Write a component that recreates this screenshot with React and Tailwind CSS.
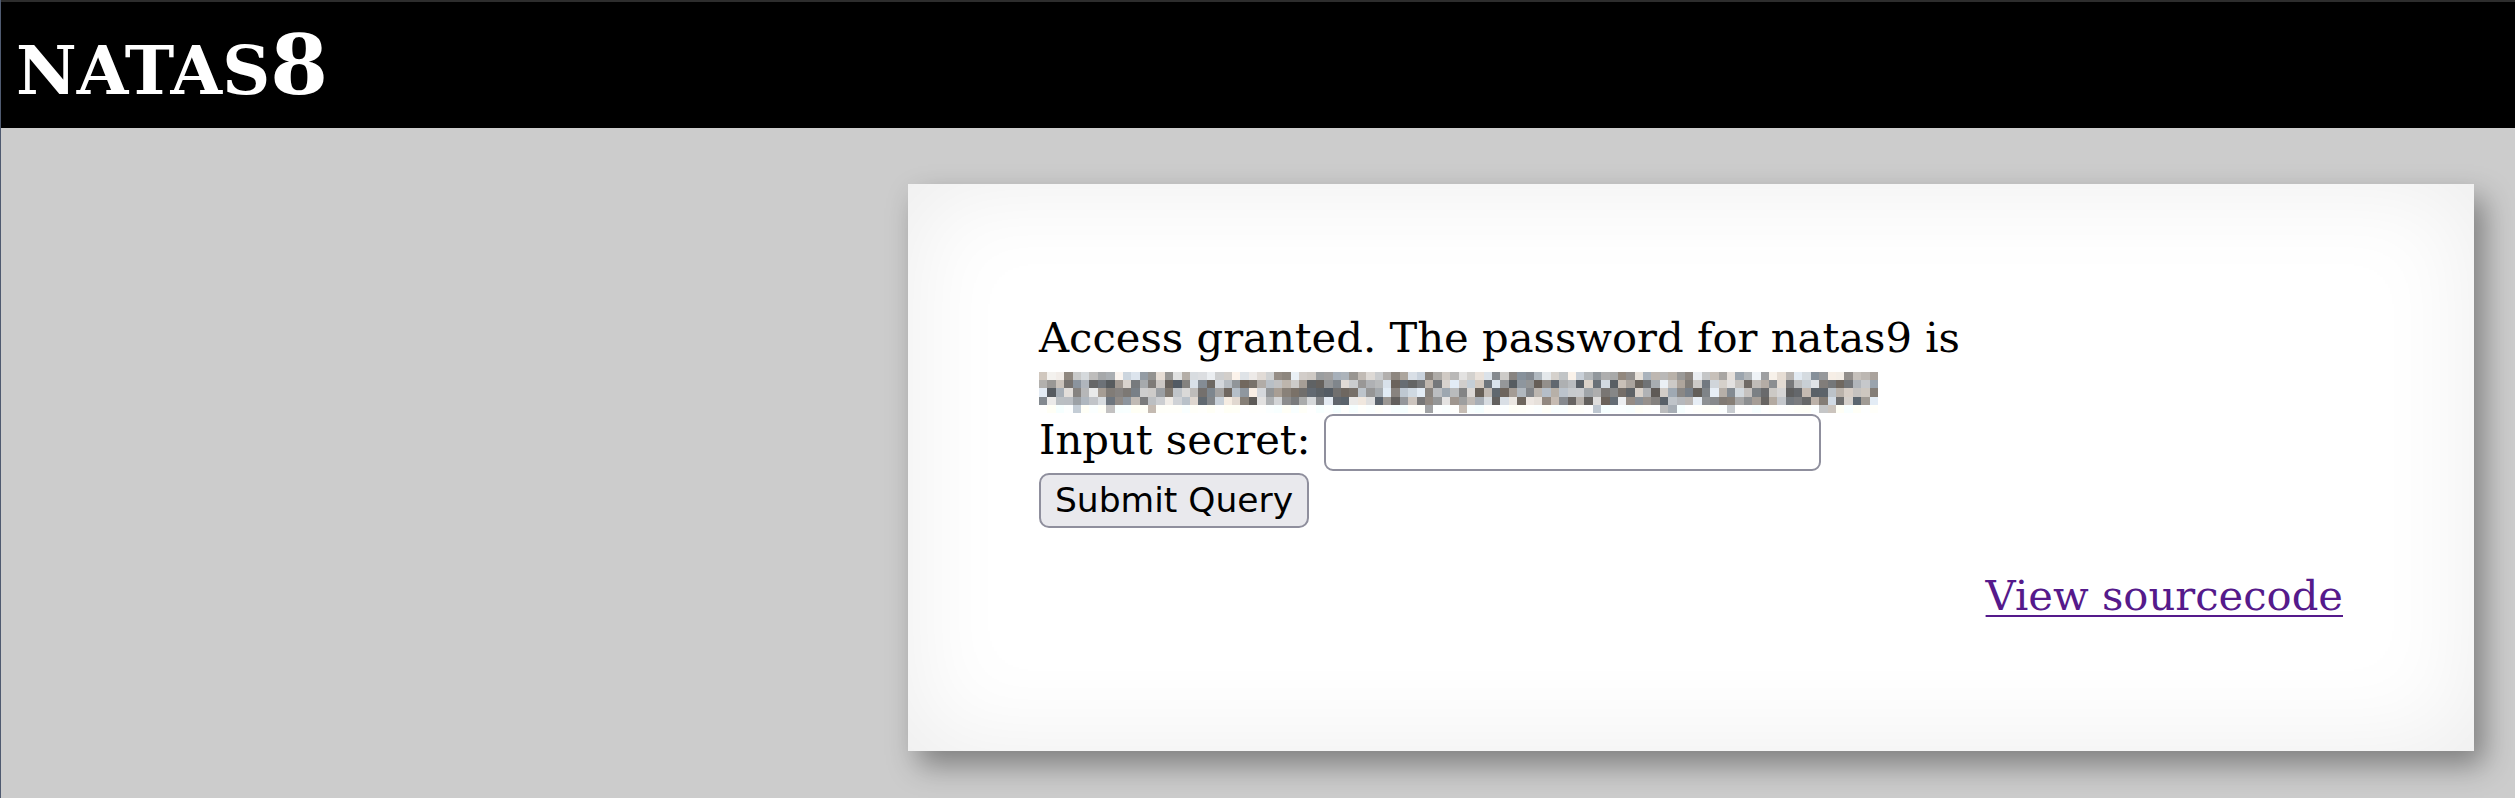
import React from 'react';

// pseudo-random mosaic standing in for the pixelated password
function rng(seed) {
  let s = seed;
  return () => {
    s = (s * 16807) % 2147483647;
    return (s - 1) / 2147483646;
  };
}

const COLS = 100;
const ROWS = 5;

function buildMosaic() {
  const r = rng(9137);
  const cells = [];
  for (let y = 0; y < ROWS; y++) {
    for (let x = 0; x < COLS; x++) {
      let v;
      if (y === 4) {
        v = r() < 0.1 ? 160 + r() * 60 : 255;
      } else if (y === 0) {
        v = r() < 0.6 ? 130 + r() * 80 : 205 + r() * 40;
      } else {
        v = 90 + r() * 150;
      }
      const tint = (r() - 0.5) * 20;
      const c = `rgb(${Math.round(v + tint)}, ${Math.round(v)}, ${Math.round(v - tint)})`;
      cells.push(<div key={`${x}-${y}`} style={{ backgroundColor: c }} />);
    }
  }
  return cells;
}

const serif = 'font-["DejaVu_Serif","Liberation_Serif",serif]';

export default function App() {
  const mosaic = buildMosaic();

  return (
    <div className="min-h-screen bg-[#cccccc] border-l border-[#4f5a70]">
      <div className="h-[2px] bg-[#2d2d2d]" />
      <div className="h-[126px] bg-black pl-[15px] pt-[22px]">
        <h1 className={`${serif} flex items-baseline font-bold text-white`}>
          <span className="text-[66.5px] leading-[83px]">NATAS</span>
          <span className="text-[83px] leading-[83px]">8</span>
        </h1>
      </div>

      <div className="pl-[907px] pt-[56px] pb-[47px]">
        <div className={`${serif} w-[1566px] bg-white px-[131px] pt-[130px] pb-[131px] text-[41.7px] leading-[48.5px] text-black shadow-[10px_14px_28px_rgba(0,0,0,0.38),inset_0_0_100px_rgba(0,0,0,0.08)]`}>
          <div>Access granted. The password for natas9 is</div>
          <div className="h-[49px] pt-[9px]">
            <div
              className="grid h-[42px] w-[839px]"
              style={{ gridTemplateColumns: `repeat(${COLS}, 1fr)`, gridTemplateRows: `repeat(${ROWS}, 1fr)` }}
            >
              {mosaic}
            </div>
          </div>

          <form onSubmit={(e) => e.preventDefault()} className="mb-[44px]">
            <div className="flex items-start">
              <span className="mt-[4px]">Input secret:</span>
              <input
                name="secret"
                className="ml-[13px] mt-[2px] h-[57px] w-[497px] rounded-[9px] border-2 border-[#8f8f9d] bg-white px-2 font-['DejaVu_Sans',sans-serif] text-[34px] outline-none"
              />
            </div>
            <button
              type="submit"
              className="mt-[2px] h-[55px] w-[270px] rounded-[10px] border-2 border-[#8f8f9d] bg-[#e9e9ed] font-['DejaVu_Sans',sans-serif] text-[34.5px] leading-none text-black"
            >
              Submit Query
            </button>
          </form>

          <div className="text-right">
            <a href="#" className="text-[#551a8b] underline decoration-2 underline-offset-[5px]">
              View sourcecode
            </a>
          </div>
        </div>
      </div>
    </div>
  );
}
